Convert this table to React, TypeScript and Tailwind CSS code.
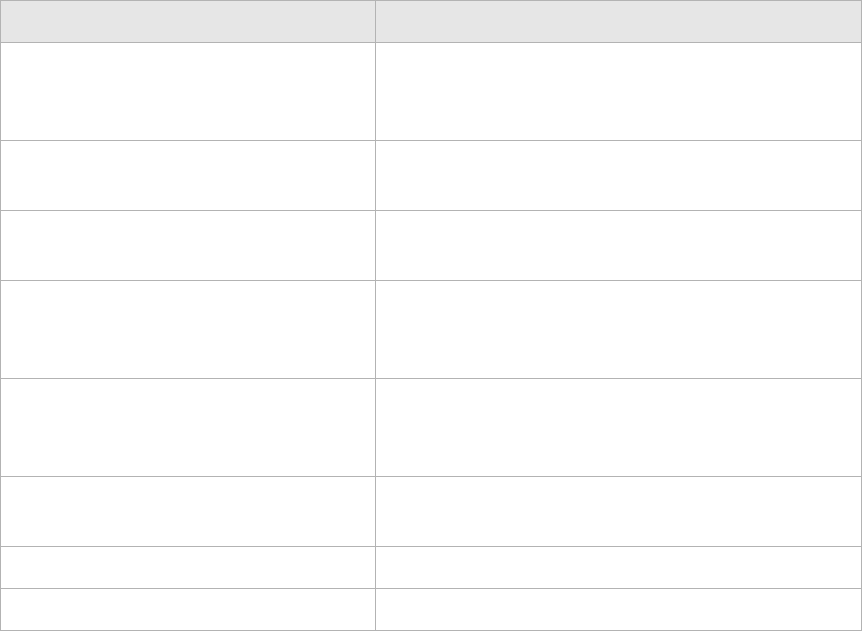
const rows = [98, 70, 70, 98, 98, 70, 42, 42];

export default function App() {
  return (
    <div className="w-[862px] h-[631px] bg-white font-['Liberation_Sans',sans-serif] text-sm text-gray-800">
      <div className="grid grid-cols-[375px_486px] border-l border-t border-[#b3b3b3]">
        {/* header */}
        <div className="h-[42px] bg-[#e6e6e6] border-r border-b border-[#b3b3b3]" />
        <div className="h-[42px] bg-[#e6e6e6] border-r border-b border-[#b3b3b3]" />
        {rows.map((h, i) => (
          <>
            <div
              key={`a${i}`}
              className="border-r border-b border-[#b3b3b3]"
              style={{ height: h }}
            />
            <div
              key={`b${i}`}
              className="border-r border-b border-[#b3b3b3]"
              style={{ height: h }}
            />
          </>
        ))}
      </div>
    </div>
  );
}
